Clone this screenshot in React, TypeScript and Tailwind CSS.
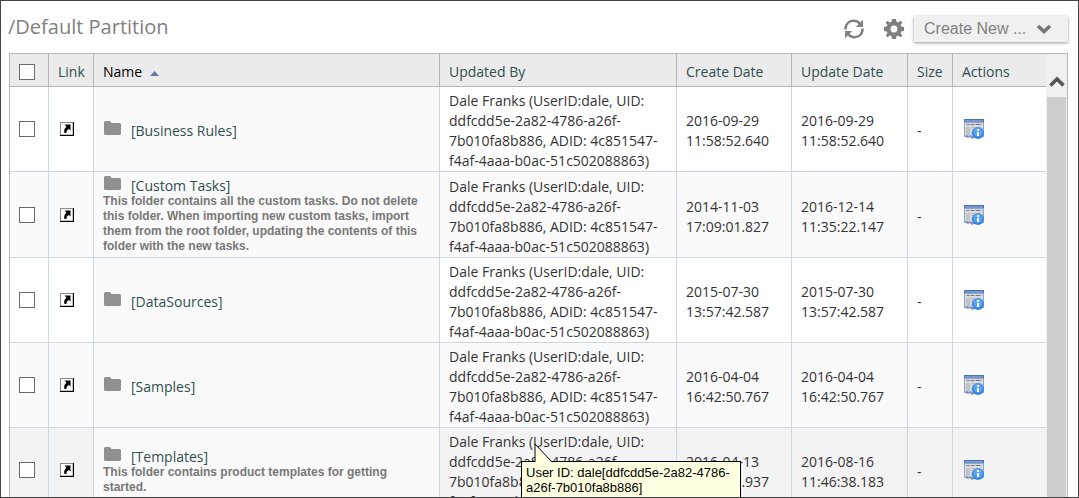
import { useState } from "react";

type Item = {
  name: string;
  description?: string;
  created: string[];
  updated: string[];
};

const ITEMS: Item[] = [
  {
    name: "[Business Rules]",
    created: ["2016-09-29", "11:58:52.640"],
    updated: ["2016-09-29", "11:58:52.640"],
  },
  {
    name: "[Custom Tasks]",
    description:
      "This folder contains all the custom tasks. Do not delete this folder. When importing new custom tasks, import them from the root folder, updating the contents of this folder with the new tasks.",
    created: ["2014-11-03", "17:09:01.827"],
    updated: ["2016-12-14", "11:35:22.147"],
  },
  {
    name: "[DataSources]",
    created: ["2015-07-30", "13:57:42.587"],
    updated: ["2015-07-30", "13:57:42.587"],
  },
  {
    name: "[Samples]",
    created: ["2016-04-04", "16:42:50.767"],
    updated: ["2016-04-04", "16:42:50.767"],
  },
  {
    name: "[Templates]",
    description: "This folder contains product templates for getting started.",
    created: ["2016-04-13", "11:46:37.937"],
    updated: ["2016-08-16", "11:46:38.183"],
  },
];

const UPDATED_BY =
  "Dale Franks (UserID:dale, UID: ddfcdd5e-2a82-4786-a26f-7b010fa8b886, ADID: 4c851547-f4af-4aaa-b0ac-51c502088863)";

const HOVERED = 4;

const TH = "border-r border-b border-[#b5b5b5] px-[9px] pt-[3px] text-left font-normal";
const TD = "border-r border-b border-[#cdd7e4] px-[9px] py-[2px]";
const TD_TEXT = "border-r border-b border-[#cdd7e4] px-[9px] pt-1";

function rowColor(i: number) {
  if (i === HOVERED) return "bg-[#f3f3f3]";
  return i % 2 ? "bg-[#fafafa]" : "bg-white";
}

function RefreshIcon() {
  return (
    <svg width="20" height="20" viewBox="0 0 20 20" fill="none" stroke="#808080" strokeWidth="2.6">
      <path d="M1.6 10.5V8.5C2.2 4.500 5.500 1.800 9.500 1.800c2.600 0 4.800 1 6.300 2.900" />
      <path d="M18.400 9.500v2c-.6 4-3.900 6.700-7.900 6.700-2.600 0-4.800-1-6.300-2.900" />
      <path d="M19 .8V8h-7.200z" fill="#808080" stroke="none" />
      <path d="M1 19.200V12h7.200z" fill="#808080" stroke="none" />
    </svg>
  );
}

function GearIcon() {
  return (
    <svg width="20" height="20" viewBox="0 0 20 20" fill="#808080" fillRule="evenodd">
      <path d="M8 0h4l.5 2.700 1.700.7L16.500 1.800 18.300 3.600l-1.700 2.300.7 1.700 2.700.4v4l-2.700.5-.7 1.700 1.700 2.300-1.800 1.800-2.300-1.700-1.700.7L12 20H8l-.5-2.700-1.700-.7-2.300 1.700-1.800-1.800 1.700-2.300-.7-1.700L0 12V8l2.700-.4.7-1.700-1.700-2.300 1.800-1.800 2.300 1.600 1.700-.7zM10 6.600a3.400 3.400 0 1 0 0 6.800 3.400 3.400 0 0 0 0-6.800z" />
    </svg>
  );
}

function LinkIcon() {
  return (
    <svg width="14" height="14" viewBox="0 0 14 14" className="block">
      <rect width="14" height="14" fill="#000" />
      <rect width="13" height="13" fill="#8a8a8a" />
      <rect x="1" y="1" width="11.500" height="11.500" fill="#fff" />
      <path d="M4.500 2.500H10.500V8.500L9 7C7 8 6.300 9 6.500 11H4.500C3.500 8.500 4.500 6.500 6.500 4.500z" fill="#000" />
    </svg>
  );
}

function FolderIcon() {
  return (
    <svg width="17" height="14" viewBox="0 0 17 14" className="block shrink-0">
      <path d="M1.500 0H6l1.500 2H15.500q1.500 0 1.500 1.500v9q0 1.500-1.500 1.500h-14Q0 14 0 12.500v-11Q0 0 1.500 0z" fill="#909090" />
    </svg>
  );
}

function DetailsIcon() {
  return (
    <svg width="20" height="20" viewBox="0 0 20 20" className="block">
      <path d="M0 0h20v18H0z" fill="#8ba6d3" />
      <path d="M0 0h20v3H0z" fill="#4c70b4" />
      <path d="M1 1h18v2H1z" fill="#7897cf" />
      <path d="M1 4h18v13H1z" fill="#d8dade" />
      <path d="M2 5h16v1H2z" fill="#b5b5b5" />
      <path d="M3 5h2v1H3zM7 5h3v1H7zM12 5h4v1h-4z" fill="#777" />
      <path d="M2 8h4v9H2z" fill="#c4c4c4" />
      <path d="M7 8h4v1H7zM7 10h4v1H7zM7 12h3v1H7zM7 14h3v1H7z" fill="#bbb" />
      <path d="M1 17l2-1 2 2 2-2 2 2 1-1v2l-2 1-2-2-2 1-2-1z" fill="#7690bb" />
      <circle cx="14" cy="14" r="6" fill="#3b86df" />
      <circle cx="14" cy="13" r="4.500" fill="#5aa4f2" />
      <path d="M13 10h2v2h-2zM13 13h2v4h-2z" fill="#fff" />
    </svg>
  );
}

function Chevron({ up }: { up?: boolean }) {
  return (
    <svg width="16" height="11" viewBox="0 0 16 11" fill="none" strokeWidth="3.600">
      {up ? (
        <path d="M1.500 9.500L8 3l6.500 6.500" stroke="#555" />
      ) : (
        <path d="M2 2l6 5.500L14 2" stroke="#777" />
      )}
    </svg>
  );
}

function Checkbox({
  label,
  checked,
  onChange,
}: {
  label: string;
  checked: boolean;
  onChange: () => void;
}) {
  return (
    <input
      type="checkbox"
      aria-label={label}
      checked={checked}
      onChange={onChange}
      className="block h-4 w-4 appearance-none border border-[#6b6b6b] bg-white checked:bg-[#6b6b6b]"
    />
  );
}

function UserTooltip() {
  return (
    <div role="tooltip" className="absolute top-[33px] left-[81px] z-10 w-[220px] border border-black bg-[#ffffe1] px-1 py-[3px] font-['Liberation_Sans',sans-serif] text-[13px] leading-[15px] text-black">
      <svg width="20" height="20" viewBox="0 0 20 20" className="absolute -top-[19px] left-[12px]">
        <path d="M1 20V1l17 18v1z" fill="#ffffe1" />
        <path d="M1 19V1l17 18" fill="none" stroke="#000" />
      </svg>
      User ID: dale[ddfcdd5e-2a82-4786-a26f-7b010fa8b886]
    </div>
  );
}

export default function App() {
  const [selected, setSelected] = useState<string[]>([]);

  function toggle(name: string) {
    setSelected((prev) =>
      prev.includes(name) ? prev.filter((n) => n !== name) : [...prev, name]
    );
  }

  function toggleAll() {
    setSelected((prev) =>
      prev.length === ITEMS.length ? [] : ITEMS.map((item) => item.name)
    );
  }

  return (
    <div className="flex h-screen flex-col overflow-hidden border border-[#444] bg-white font-['Open_Sans',sans-serif] text-[14px] leading-5 text-[#333]">
      <header className="flex h-[52px] shrink-0 items-center pr-[10px] pl-[7px]">
        <h1 className="flex-1 text-[20px] leading-6 font-medium text-[#808080]">
          /Default Partition
        </h1>
        <button type="button" aria-label="Refresh" className="mt-1 mr-5">
          <RefreshIcon />
        </button>
        <button type="button" aria-label="Settings" className="mt-1 mr-[10px]">
          <GearIcon />
        </button>
        <button
          type="button"
          className="mt-1 flex h-[26px] w-[154px] items-center justify-between bg-[#f0f0f0] pr-4 pl-[10px] font-['Liberation_Sans',sans-serif] text-[16px] text-[#808080] shadow-[0_1px_3px_#999]"
        >
          Create New ...
          <Chevron />
        </button>
      </header>

      <div className="mr-[10px] ml-2 flex min-h-0 flex-1 overflow-hidden border-x border-t border-[#b5b5b5]">
        <table className="w-full min-w-0 flex-1 table-fixed border-separate border-spacing-0 self-start">
          <colgroup>
            <col className="w-[39px]" />
            <col className="w-[45px]" />
            <col />
            <col className="w-[237px]" />
            <col className="w-[115px]" />
            <col className="w-[116px]" />
            <col className="w-[45px]" />
            <col className="w-[93px]" />
          </colgroup>
          <thead>
            <tr className="h-[33px] bg-[#ebebeb] text-[#2f4f4f]">
              <th className={TH}>
                <Checkbox
                  label="Select all"
                  checked={selected.length === ITEMS.length}
                  onChange={toggleAll}
                />
              </th>
              <th className={TH}>Link</th>
              <th className={TH}>
                <span className="flex items-center gap-2 text-black">
                  Name
                  <svg width="9" height="5" viewBox="0 0 9 5" className="mt-1">
                    <path d="M0 5L4.500 0 9 5z" fill="#6475a4" />
                  </svg>
                </span>
              </th>
              <th className={TH}>Updated By</th>
              <th className={TH}>Create Date</th>
              <th className={TH}>Update Date</th>
              <th className={TH}>Size</th>
              <th className="border-b border-[#b5b5b5] px-[9px] pt-[3px] text-left font-normal">
                Actions
              </th>
            </tr>
          </thead>
          <tbody>
            {ITEMS.map((item, i) => (
              <tr key={item.name} className={rowColor(i)}>
                <td className={TD}>
                  <Checkbox
                    label={`Select ${item.name}`}
                    checked={selected.includes(item.name)}
                    onChange={() => toggle(item.name)}
                  />
                </td>
                <td className={TD}>
                  <a href="#" aria-label={`Link to ${item.name}`} className="ml-[2px] block w-[14px]">
                    <LinkIcon />
                  </a>
                </td>
                <td className={`${TD_TEXT} bg-[#fafafa] pb-[3px]`}>
                  <a href="#" className="flex h-[18px] items-start gap-[10px] pl-px text-[#2f4f4f]">
                    <FolderIcon />
                    {item.name}
                  </a>
                  {item.description && (
                    <p className="font-['Liberation_Sans',sans-serif] text-[12px] leading-[15px] font-bold text-[#777]">
                      {item.description}
                    </p>
                  )}
                </td>
                <td className={`${TD_TEXT} relative`}>
                  {UPDATED_BY}
                  {i === HOVERED && <UserTooltip />}
                </td>
                <td className={TD_TEXT}>
                  {item.created[0]}
                  <br />
                  {item.created[1]}
                </td>
                <td className={TD_TEXT}>
                  {item.updated[0]}
                  <br />
                  {item.updated[1]}
                </td>
                <td className={TD_TEXT}>-</td>
                <td className="border-b border-[#cdd7e4] px-[9px] py-[2px]">
                  <button type="button" aria-label={`Details of ${item.name}`} className="ml-[2px] block">
                    <DetailsIcon />
                  </button>
                </td>
              </tr>
            ))}
          </tbody>
        </table>

        <div className="flex w-[21px] shrink-0 flex-col bg-[#f0f0f0] px-px">
          <button type="button" aria-label="Scroll up" className="flex h-[43px] shrink-0 items-center justify-center pt-3">
            <Chevron up />
          </button>
          <div className="flex-1 bg-[#cdcdcd]" />
        </div>
      </div>
    </div>
  );
}
